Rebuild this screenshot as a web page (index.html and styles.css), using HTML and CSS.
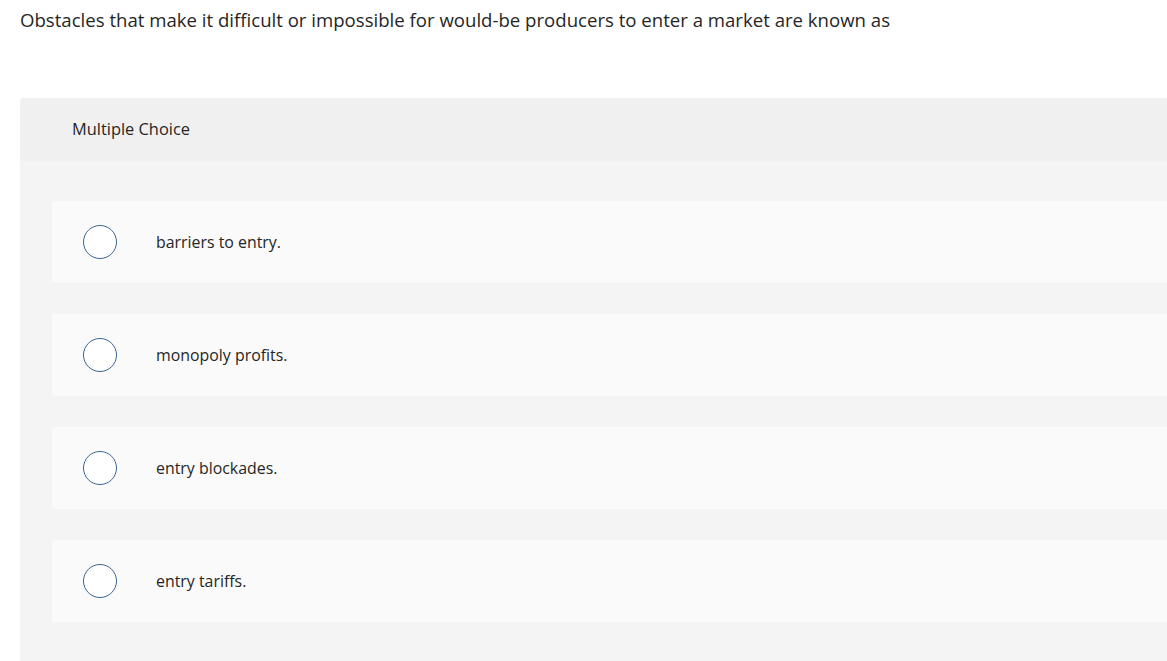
FILE: index.html
```html
<!DOCTYPE html>
<html>
<head>
<meta charset="utf-8">
<link rel="stylesheet" href="styles.css">
</head>
<body>
<p class="question">Obstacles that make it difficult or impossible for would-be producers to enter a market are known as</p>
<div class="mc">
  <div class="mc-header">Multiple Choice</div>
  <div class="mc-body">
    <div class="option"><span class="radio"></span><span class="label">barriers to entry.</span></div>
    <div class="option"><span class="radio"></span><span class="label">monopoly profits.</span></div>
    <div class="option"><span class="radio"></span><span class="label">entry blockades.</span></div>
    <div class="option"><span class="radio"></span><span class="label">entry tariffs.</span></div>
  </div>
</div>
</body>
</html>
```
FILE: styles.css
```css
html, body {
  margin: 0;
  padding: 0;
  background: #ffffff;
  overflow: hidden;
}
body {
  font-family: "Open Sans", Lato, "Liberation Sans", sans-serif;
  color: #262626;
  font-variant-ligatures: none;
}
.question {
  margin: 0;
  padding: 8px 0 0 20px;
  font-size: 18.6px;
  line-height: 24px;
}
.mc {
  margin: 66px 0 0 20px;
  border-radius: 3px 0 0 0;
  overflow: hidden;
}
.mc-header {
  background: #f0f0f0;
  height: 63px;
  display: flex;
  align-items: center;
  padding-left: 52px;
  font-size: 16.4px;
  padding-bottom: 3px;
  box-sizing: border-box;
}
.mc-body {
  background: #f4f4f4;
  padding: 40px 0 40px 32px;
  display: flex;
  flex-direction: column;
  gap: 31px;
}
.option {
  background: #fafafa;
  height: 82px;
  border-radius: 3px 0 0 3px;
  display: flex;
  align-items: center;
  padding-left: 31px;
}
.radio {
  width: 34px;
  height: 34px;
  border: 1.3px solid #3a6490;
  border-radius: 50%;
  background: #fff;
  box-sizing: border-box;
  flex: none;
}
.label {
  margin-left: 39px;
  font-size: 15.9px;
}
```
